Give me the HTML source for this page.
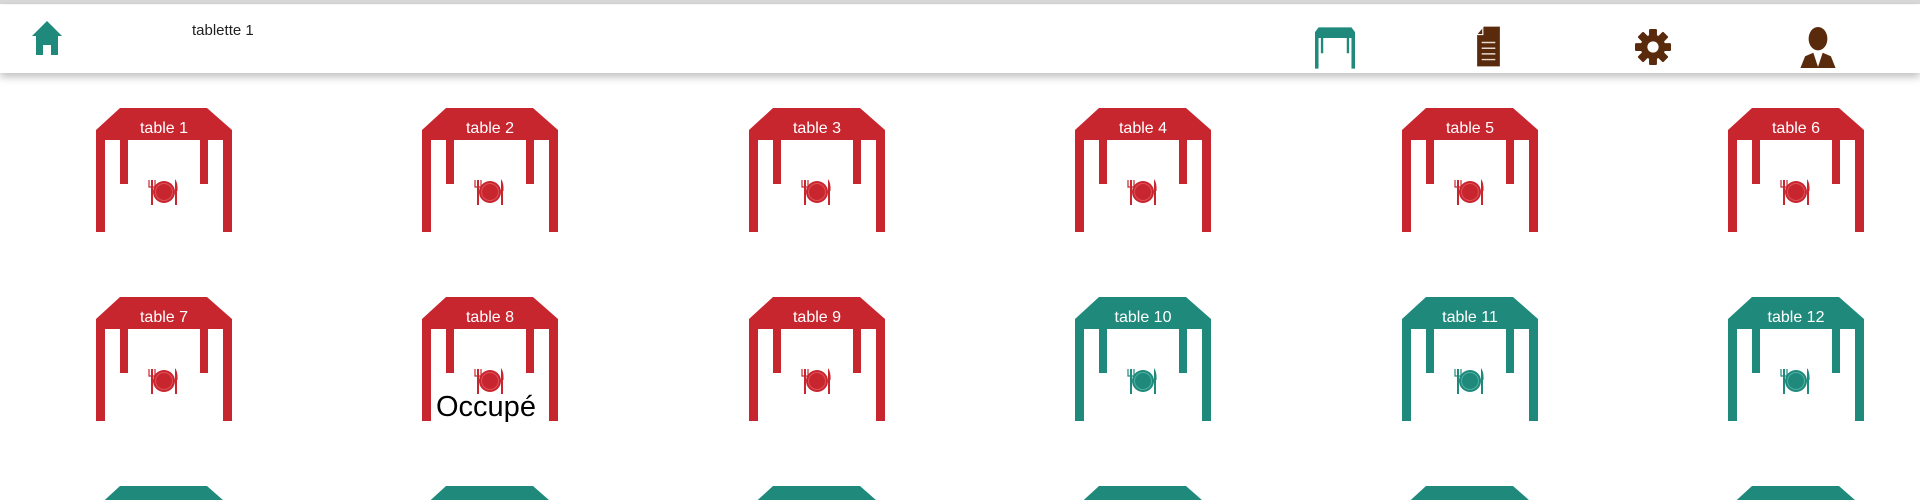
<!DOCTYPE html>
<html><head><meta charset="utf-8"><style>
html,body{margin:0;width:1920px;height:500px;overflow:hidden;background:#fff;font-family:"Liberation Sans",sans-serif}
#w{position:relative;width:1920px;height:500px;overflow:hidden}
.top{position:absolute;left:0;top:0;width:1920px;height:4px;background:#d8d8d8}
.hdr{position:absolute;left:0;top:5px;width:1920px;height:68px;background:#fff;box-shadow:0 4px 8px rgba(0,0,0,.25)}
.t{position:absolute;width:136px;height:124px}
.t span{position:absolute;left:0;width:136px;top:12px;text-align:center;color:#fff;font-size:16px}
.occ{position:absolute;font-size:29px;color:#000}
</style></head><body><div id="w">
<div class="top"></div>
<div class="hdr"></div>
<svg style="position:absolute;left:31px;top:20px" width="32" height="36" viewBox="0 0 32 36"><path d="M16 1 L31 16 L27 16 L27 35 L20 35 L20 25 L12 25 L12 35 L5 35 L5 16 L1 16 Z" fill="#1f8a7c"/></svg>
<div style="position:absolute;left:192px;top:22px;font-size:15px;color:#222">tablette 1</div>
<svg style="position:absolute;left:1315px;top:26px" width="40" height="44" viewBox="0 0 34 37"><path d="M3 1 H31 L34 5 V36 H31 V10 H3 V36 H0 V5 Z M5 10 H7 V23 H5 Z M27 10 H29 V23 H27 Z" fill="#1f8a7c"/></svg>
<svg style="position:absolute;left:1476px;top:25px" width="25" height="43" viewBox="0 0 22 37"><path d="M7 1 H21 V36 H1 V8 Z" fill="#5a2a0c"/><path d="M6 2 V8 H1" fill="none" stroke="#fff" stroke-width="1"/><path d="M5 15H17M5 20H17M5 25H17M5 30H17" stroke="#e8d8cc" stroke-width="1.3"/></svg>
<svg style="position:absolute;left:1635px;top:26px" width="36" height="42" viewBox="-16 -18 32 36"><g fill="#5a2a0c"><circle r="11"/><g id="k"><rect x="-3.5" y="-16" width="7" height="32" rx="1"/></g><use href="#k" transform="rotate(45)"/><use href="#k" transform="rotate(90)"/><use href="#k" transform="rotate(135)"/></g><circle r="5" fill="#fff"/></svg>
<svg style="position:absolute;left:1800px;top:27px" width="36" height="41" viewBox="0 0 30 35"><ellipse cx="15" cy="10" rx="8" ry="10" fill="#5a2a0c"/><path d="M0 35 L4 25 L11 22 L15 34 L19 22 L26 25 L30 35 Z" fill="#5a2a0c"/><path d="M13 24 L17 24 L16 31 L14 31Z" fill="#fff"/></svg>

<svg width="0" height="0" style="position:absolute"><defs>
<g id="tr"><path d="M24 0 H111 L136 22 V124 H127 V32 H9 V124 H0 V22 Z" fill="#c8262f"/><rect x="24" y="32" width="8" height="44" fill="#c8262f"/><rect x="104" y="32" width="8" height="44" fill="#c8262f"/><circle cx="68" cy="84" r="11" fill="#c8262f"/><circle cx="68" cy="84" r="8.5" fill="none" stroke="#e05058" stroke-width="1"/><rect x="55" y="72" width="2" height="25" fill="#c8262f"/><path d="M53 72v7h6v-7" fill="none" stroke="#c8262f" stroke-width="1.2"/><path d="M79 71 q3 4 2.5 12 h-0.5 v14 h-2 Z" fill="#c8262f"/></g>
<g id="tg"><path d="M24 0 H111 L136 22 V124 H127 V32 H9 V124 H0 V22 Z" fill="#1f8a7c"/><rect x="24" y="32" width="8" height="44" fill="#1f8a7c"/><rect x="104" y="32" width="8" height="44" fill="#1f8a7c"/><circle cx="68" cy="84" r="11" fill="#1f8a7c"/><circle cx="68" cy="84" r="8.5" fill="none" stroke="#4cb0a2" stroke-width="1"/><rect x="55" y="72" width="2" height="25" fill="#1f8a7c"/><path d="M53 72v7h6v-7" fill="none" stroke="#1f8a7c" stroke-width="1.2"/><path d="M79 71 q3 4 2.5 12 h-0.5 v14 h-2 Z" fill="#1f8a7c"/></g>
</defs></svg>

<div class="t" style="left:96px;top:108px"><svg width="136" height="124"><use href="#tr"/></svg><span>table 1</span></div>
<div class="t" style="left:422px;top:108px"><svg width="136" height="124"><use href="#tr"/></svg><span>table 2</span></div>
<div class="t" style="left:749px;top:108px"><svg width="136" height="124"><use href="#tr"/></svg><span>table 3</span></div>
<div class="t" style="left:1075px;top:108px"><svg width="136" height="124"><use href="#tr"/></svg><span>table 4</span></div>
<div class="t" style="left:1402px;top:108px"><svg width="136" height="124"><use href="#tr"/></svg><span>table 5</span></div>
<div class="t" style="left:1728px;top:108px"><svg width="136" height="124"><use href="#tr"/></svg><span>table 6</span></div>

<div class="t" style="left:96px;top:297px"><svg width="136" height="124"><use href="#tr"/></svg><span>table 7</span></div>
<div class="t" style="left:422px;top:297px"><svg width="136" height="124"><use href="#tr"/></svg><span>table 8</span></div>
<div class="t" style="left:749px;top:297px"><svg width="136" height="124"><use href="#tr"/></svg><span>table 9</span></div>
<div class="t" style="left:1075px;top:297px"><svg width="136" height="124"><use href="#tg"/></svg><span>table 10</span></div>
<div class="t" style="left:1402px;top:297px"><svg width="136" height="124"><use href="#tg"/></svg><span>table 11</span></div>
<div class="t" style="left:1728px;top:297px"><svg width="136" height="124"><use href="#tg"/></svg><span>table 12</span></div>
<div class="occ" style="left:436px;top:391px">Occupé</div>

<div class="t" style="left:96px;top:486px"><svg width="136" height="124"><use href="#tg"/></svg></div>
<div class="t" style="left:422px;top:486px"><svg width="136" height="124"><use href="#tg"/></svg></div>
<div class="t" style="left:749px;top:486px"><svg width="136" height="124"><use href="#tg"/></svg></div>
<div class="t" style="left:1075px;top:486px"><svg width="136" height="124"><use href="#tg"/></svg></div>
<div class="t" style="left:1402px;top:486px"><svg width="136" height="124"><use href="#tg"/></svg></div>
<div class="t" style="left:1728px;top:486px"><svg width="136" height="124"><use href="#tg"/></svg></div>
</div></body></html>
